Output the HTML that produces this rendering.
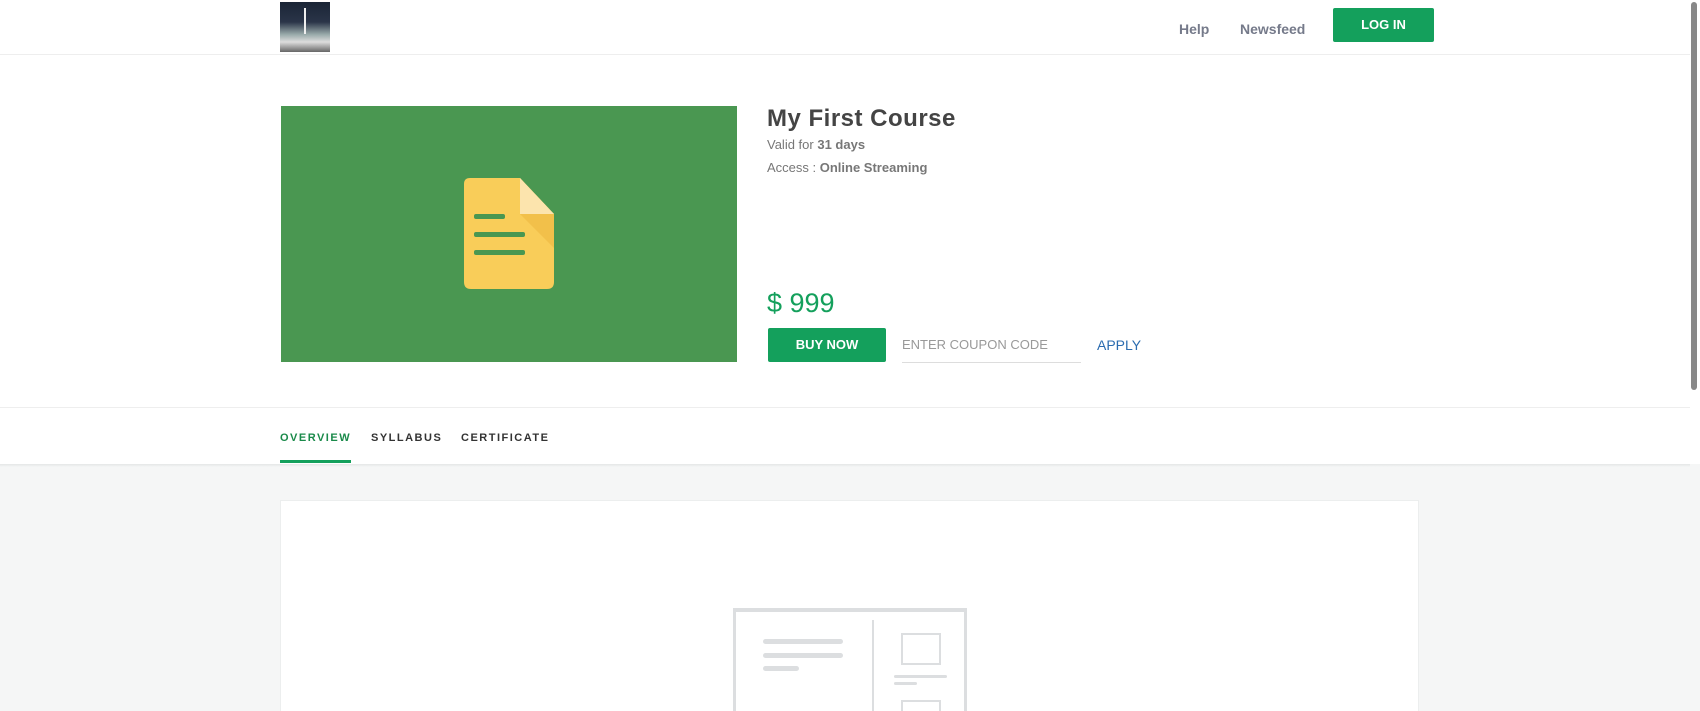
<!DOCTYPE html>
<html><head><style>
*{margin:0;padding:0;box-sizing:border-box}
html,body{width:1700px;height:711px;overflow:hidden}
body{background:#f5f6f6;font-family:"Liberation Sans",sans-serif;position:relative}
#w{position:relative;width:1700px;height:711px;overflow:hidden}
.a{position:absolute}
</style></head><body><div id="w">
<div class="a" style="left:0;top:0;width:1700px;height:464px;background:#fff"></div>
<div class="a" style="left:0;top:54px;width:1690px;height:1px;background:#eee"></div>
<div class="a" style="left:280px;top:2px;width:50px;height:50px;background:linear-gradient(#1a2536 0,#2a3448 40%,#9aa 65%,#ddd 80%,#666 100%)"></div>
<div class="a" style="left:304px;top:8px;width:2px;height:26px;background:#eee"></div>
<div class="a" style="left:1179px;top:21px;font-size:14px;font-weight:bold;color:#757a8a">Help</div>
<div class="a" style="left:1240px;top:21px;font-size:14px;font-weight:bold;color:#757a8a">Newsfeed</div>
<div class="a" style="left:1333px;top:8px;width:101px;height:34px;background:#14a05c;border-radius:2px;color:#fff;font-size:13px;font-weight:bold;text-align:center;line-height:34px">LOG IN</div>
<div class="a" style="left:1691px;top:2px;width:6px;height:388px;background:#888;border-radius:3px"></div>
<div class="a" style="left:281px;top:106px;width:456px;height:256px;background:#4a9751"></div>
<svg class="a" style="left:464px;top:178px" width="90" height="112" viewBox="0 0 90 112">
<path d="M6 0H56L90 36V104Q90 111 83 111H7Q0 111 0 104V6Q0 0 6 0Z" fill="#f9cd59"/>
<path d="M56 0L90 36V70L56 36Z" fill="#f2c04a"/>
<path d="M56 0L90 36H56Z" fill="#fce4ad"/>
<rect x="10" y="36" width="31" height="5" rx="2" fill="#4a9751"/>
<rect x="10" y="54" width="51" height="5" rx="2" fill="#4a9751"/>
<rect x="10" y="72" width="51" height="5" rx="2" fill="#4a9751"/>
</svg>
<div class="a" style="left:767px;top:105px;font-size:24px;font-weight:bold;color:#444;letter-spacing:.5px">My First Course</div>
<div class="a" style="left:767px;top:137px;font-size:13px;color:#777">Valid for <b>31 days</b></div>
<div class="a" style="left:767px;top:160px;font-size:13px;color:#777">Access : <b>Online Streaming</b></div>
<div class="a" style="left:767px;top:288px;font-size:27px;color:#14a05c">$ 999</div>
<div class="a" style="left:768px;top:328px;width:118px;height:34px;background:#14a05c;border-radius:2px;color:#fff;font-size:13px;font-weight:bold;text-align:center;line-height:34px">BUY NOW</div>
<div class="a" style="left:902px;top:337px;font-size:13px;color:#999">ENTER COUPON CODE</div>
<div class="a" style="left:902px;top:362px;width:179px;height:1px;background:#ddd"></div>
<div class="a" style="left:1097px;top:337px;font-size:14px;color:#2b6cb0">APPLY</div>
<div class="a" style="left:0;top:407px;width:1690px;height:1px;background:#eee"></div>
<div class="a" style="left:280px;top:432px;font-size:11px;font-weight:bold;letter-spacing:1.5px;color:#1a8a4a">OVERVIEW</div>
<div class="a" style="left:371px;top:432px;font-size:11px;font-weight:bold;letter-spacing:1.5px;color:#333">SYLLABUS</div>
<div class="a" style="left:461px;top:432px;font-size:11px;font-weight:bold;letter-spacing:1.5px;color:#333">CERTIFICATE</div>
<div class="a" style="left:280px;top:460px;width:71px;height:3px;background:#14a05c"></div>
<div class="a" style="left:0;top:464px;width:1690px;height:3px;background:linear-gradient(#e4e6e6,#f5f6f6)"></div>
<div class="a" style="left:280px;top:500px;width:1139px;height:211px;background:#fff;border:1px solid #eceeee;border-bottom:0"></div>
<div class="a" style="left:733px;top:608px;width:234px;height:103px;border:3px solid #dcdee0;border-top-width:4px;border-bottom:0"></div>
<div class="a" style="left:872px;top:620px;width:2px;height:91px;background:#dcdee0"></div>
<div class="a" style="left:763px;top:639px;width:80px;height:5px;border-radius:3px;background:#dcdee0"></div>
<div class="a" style="left:763px;top:653px;width:80px;height:5px;border-radius:3px;background:#dcdee0"></div>
<div class="a" style="left:763px;top:666px;width:36px;height:5px;border-radius:3px;background:#dcdee0"></div>
<div class="a" style="left:901px;top:633px;width:40px;height:32px;border:2px solid #dcdee0"></div>
<div class="a" style="left:894px;top:675px;width:53px;height:3px;border-radius:2px;background:#dcdee0"></div>
<div class="a" style="left:894px;top:682px;width:23px;height:3px;border-radius:2px;background:#dcdee0"></div>
<div class="a" style="left:901px;top:700px;width:40px;height:11px;border:2px solid #dcdee0;border-bottom:0"></div>
</div></body></html>
